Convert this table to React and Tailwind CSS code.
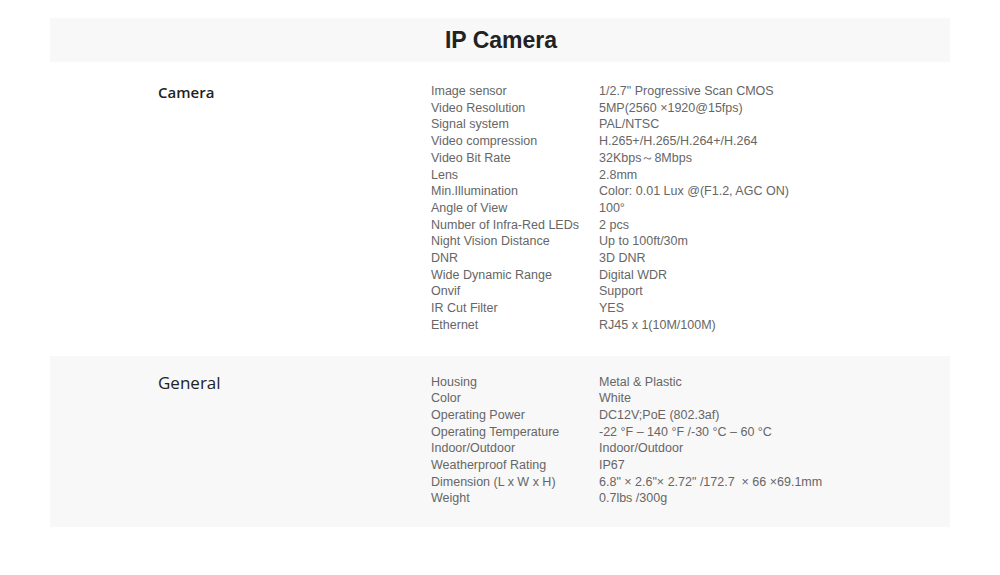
import React from 'react';

const camera = [
  ['Image sensor', '1/2.7" Progressive Scan CMOS'],
  ['Video Resolution', '5MP(2560 ×1920@15fps)'],
  ['Signal system', 'PAL/NTSC'],
  ['Video compression', 'H.265+/H.265/H.264+/H.264'],
  ['Video Bit Rate', '32Kbps～8Mbps'],
  ['Lens', '2.8mm'],
  ['Min.Illumination', 'Color: 0.01 Lux @(F1.2, AGC ON)'],
  ['Angle of View', '100°'],
  ['Number of Infra-Red LEDs', '2 pcs'],
  ['Night Vision Distance', 'Up to 100ft/30m'],
  ['DNR', '3D DNR'],
  ['Wide Dynamic Range', 'Digital WDR'],
  ['Onvif', 'Support'],
  ['IR Cut Filter', 'YES'],
  ['Ethernet', 'RJ45 x 1(10M/100M)'],
];

const general = [
  ['Housing', 'Metal & Plastic'],
  ['Color', 'White'],
  ['Operating Power', 'DC12V;PoE (802.3af)'],
  ['Operating Temperature', '-22 °F – 140 °F /-30 °C – 60 °C'],
  ['Indoor/Outdoor', 'Indoor/Outdoor'],
  ['Weatherproof Rating', 'IP67'],
  ['Dimension (L x W x H)', '6.8" × 2.6"× 2.72" /172.7  × 66 ×69.1mm'],
  ['Weight', '0.7lbs /300g'],
];

const Specs = ({ rows }) => (
  <div className="flex flex-col">
    {rows.map(([k, v]) => (
      <div key={k} className="flex text-[12.5px] leading-[16.7px] text-[#666]">
        <div className="w-[168px] shrink-0">{k}</div>
        <div className="whitespace-pre">{v}</div>
      </div>
    ))}
  </div>
);

const App = () => {
  return (
    <div className="w-[1000px] h-[575px] bg-white font-['Liberation_Sans',Arial,sans-serif] pt-[18px]">
      <div className="mx-[50px] flex flex-col">
        <div className="h-[44px] bg-[#f8f8f8] flex items-center justify-center">
          <h1 className="text-[23px] font-semibold text-[#222] pl-[2px]">IP Camera</h1>
        </div>

        {/* Camera */}
        <div className="flex pt-[21px] pb-[22px] bg-white">
          <div className="w-[381px] pl-[108px]">
            <h2 className="font-['Open_Sans',sans-serif] font-semibold text-[15px] leading-[18px] text-[#222]">Camera</h2>
          </div>
          <Specs rows={camera} />
        </div>

        {/* General */}
        <div className="flex pt-[18px] pb-[20px] bg-[#f8f8f8]">
          <div className="w-[381px] pl-[108px] -mt-[1px]">
            <h2 className="font-['Open_Sans',sans-serif] font-medium text-[17px] leading-[20px] text-[#222]">General</h2>
          </div>
          <Specs rows={general} />
        </div>
      </div>
    </div>
  );
};

export default App;
